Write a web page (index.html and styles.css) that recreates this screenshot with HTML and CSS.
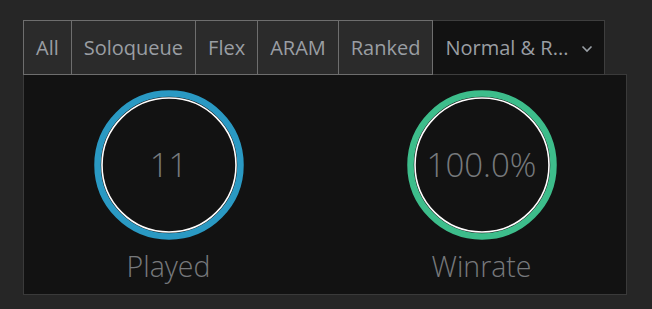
FILE: index.html
```html
<!DOCTYPE html>
<html lang="en">
  <head>
    <meta charset="UTF-8" />
    <title>Stats</title>
    <link rel="stylesheet" href="styles.css">
  </head>
  <body>
    <div class="stats">
      <div class="tabs">
        <div class="tab">All</div>
        <div class="tab">Soloqueue</div>
        <div class="tab">Flex</div>
        <div class="tab">ARAM</div>
        <div class="tab">Ranked</div>
        <div class="tab tab-active">
          <span>Normal &amp; R...</span>
          <svg class="chevron" width="12" height="8" viewBox="0 0 12 8">
            <path d="M1.5 1.5 L6 6 L10.5 1.5" fill="none" stroke="#9aa0a6" stroke-width="1.6" />
          </svg>
        </div>
      </div>

      <div class="panel">
        <div class="stat">
          <div class="ring">
            <svg width="150" height="150" viewBox="0 0 150 150">
              <circle cx="75" cy="75" r="71.5" fill="none" stroke="#2a99c3" stroke-width="6.5" />
              <circle cx="75" cy="75" r="67" fill="none" stroke="#ffffff" stroke-width="1.6" />
            </svg>
            <span class="value">11</span>
          </div>
          <div class="label">Played</div>
        </div>
        <div class="stat">
          <div class="ring">
            <svg width="150" height="150" viewBox="0 0 150 150">
              <circle cx="75" cy="75" r="71.5" fill="none" stroke="#3dbd8b" stroke-width="6.5" />
              <circle cx="75" cy="75" r="67" fill="none" stroke="#ffffff" stroke-width="1.6" />
            </svg>
            <span class="value">100.0%</span>
          </div>
          <div class="label">Winrate</div>
        </div>
      </div>
    </div>
  </body>
</html>
```

FILE: styles.css
```css
body {
  margin: 0;
  padding: 20px 0 0 23px;
  background-color: #262626;
  font-family: "Open Sans", "DejaVu Sans", sans-serif;
}
.stats {
  width: 604px;
}
.tabs {
  display: flex;
  height: 55px;
  position: relative;
  z-index: 1;
}
.tab {
  display: flex;
  align-items: center;
  padding: 0 12px;
  background-color: #2b2b2b;
  border: 1px solid #6e6e6e;
  border-left: none;
  color: #9a9ea3;
  font-size: 20px;
  box-sizing: border-box;
}
.tab:first-child {
  border-left: 1px solid #6e6e6e;
}
.tab-active {
  width: 172px;
  justify-content: space-between;
  background-color: #121212;
  border-color: #3e3e3e;
  padding-left: 12px;
  padding-right: 11px;
}
.chevron {
  margin-top: 2px;
}
.panel {
  display: flex;
  justify-content: center;
  gap: 163px;
  height: 221px;
  box-sizing: border-box;
  margin-top: -1px;
  padding-top: 15px;
  background-color: #121212;
  border: 1px solid #3a3a3a;
}
.stat {
  display: flex;
  flex-direction: column;
  align-items: center;
}
.ring {
  position: relative;
  width: 150px;
  height: 150px;
  display: flex;
  align-items: center;
  justify-content: center;
}
.ring svg {
  position: absolute;
  top: 0;
  left: 0;
}
.value {
  font-size: 33px;
  font-weight: 300;
  color: #777a7d;
  margin-top: -2px;
}
.label {
  margin-top: 8px;
  font-size: 28.5px;
  line-height: 36px;
  font-weight: 300;
  color: #77797c;
}
```
